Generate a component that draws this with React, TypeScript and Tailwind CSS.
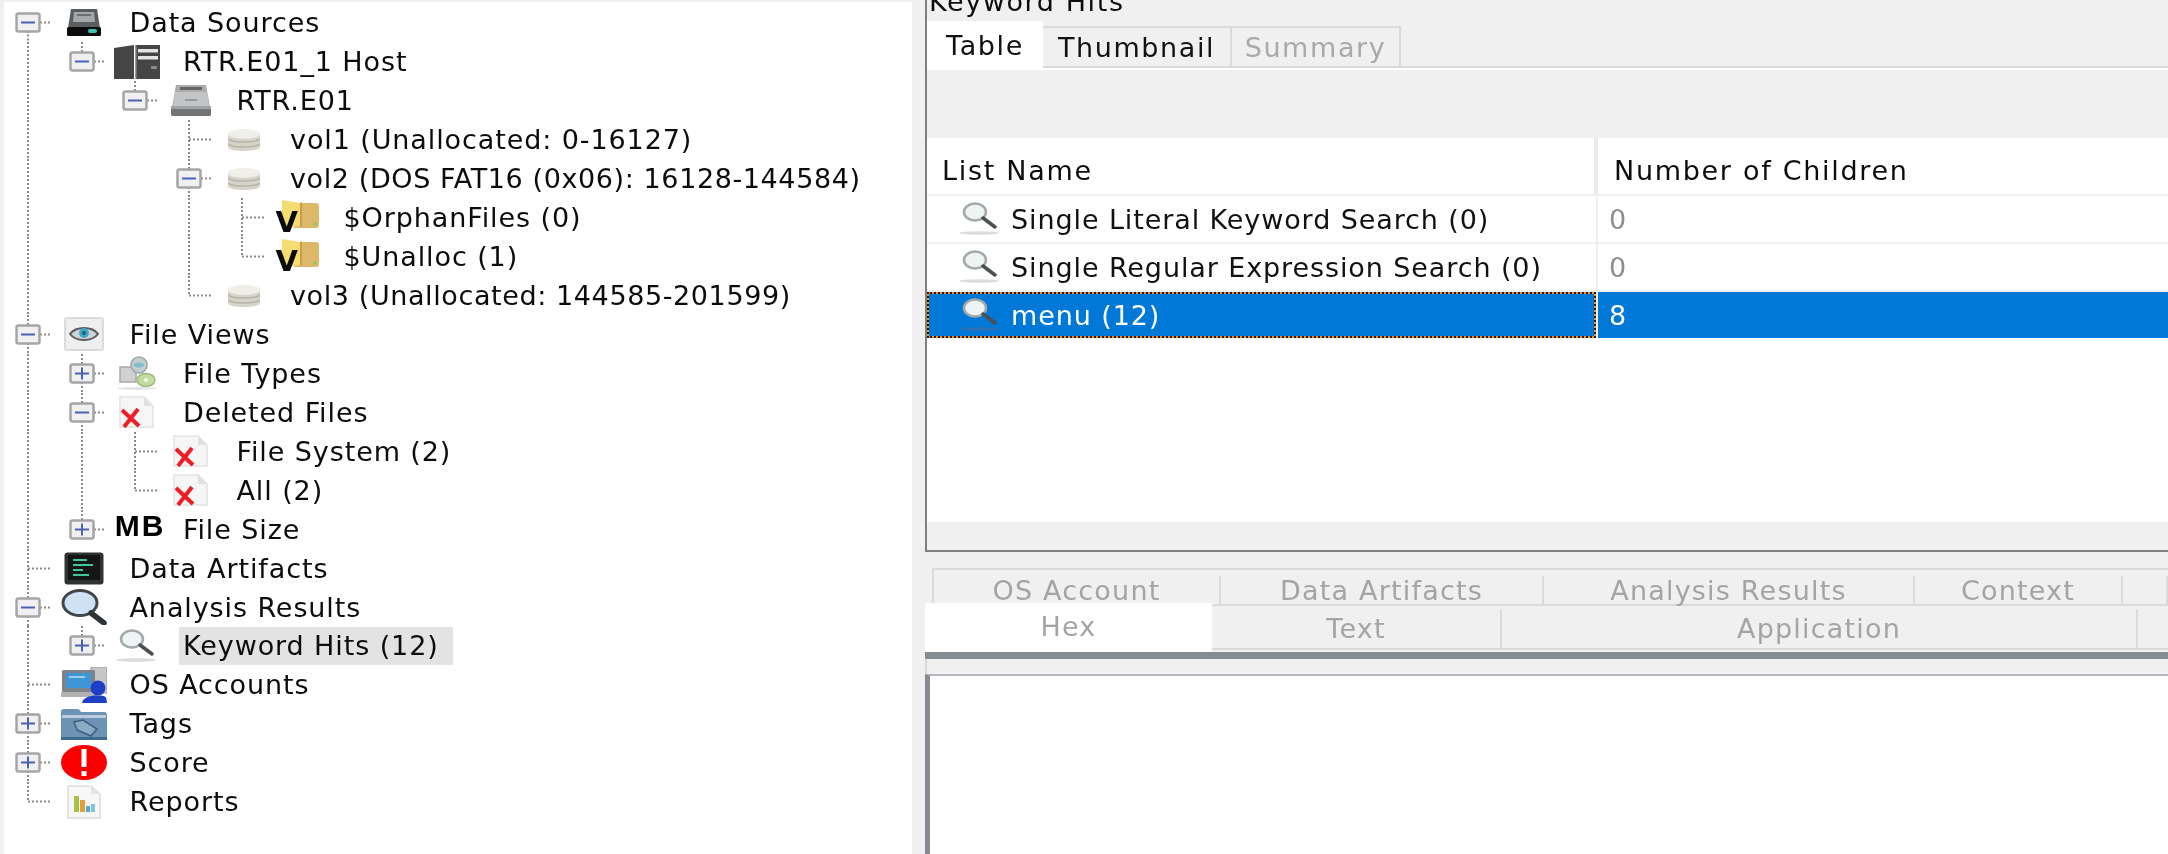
import type { ReactNode } from "react";

const FONT = "font-['DejaVu_Sans','Noto_Sans',sans-serif]";

// Tree icons
function DriveIcon() {
  return (
    <svg width="36" height="30" viewBox="0 0 36 30">
      <path d="M5 1h26l3 19H2z" fill="#5a5d60" />
      <path d="M8 4h20l1 10H7z" fill="#a5a8ab" />
      <path d="M11 6h14v2H11z" fill="#6d7073" />
      <rect x="1" y="19" width="34" height="9" rx="1.5" fill="#0c0c0c" />
      <rect x="22" y="21" width="9" height="4" rx="2" fill="#3fc0b0" />
    </svg>
  );
}

function HostIcon() {
  return (
    <svg width="46" height="35" viewBox="0 0 46 35">
      <path d="M0 4l20-3v34H0z" fill="#454545" />
      <path d="M22 1h24v34H22z" fill="#454545" />
      <path d="M21 1h1.5v34H21z" fill="#9a9a9a" />
      <path d="M24 5h20v3.5H24zM24 12h20v3.5H24z" fill="#e4e4e4" />
      <rect x="37" y="22" width="6" height="3" fill="#8a8a8a" />
    </svg>
  );
}

function DiskIcon() {
  return (
    <svg width="42" height="33" viewBox="0 0 42 33">
      <path d="M6 1h30l4 22H2z" fill="#a9abad" />
      <path d="M10 3h22v3H10z" fill="#666666" />
      <path d="M5 8h32l2 14H3z" fill="#c2c4c6" />
      <path d="M15 15h12v2H15z" fill="#96989a" />
      <rect x="1" y="22" width="40" height="10" rx="1.5" fill="#727476" />
      <rect x="1" y="22" width="40" height="3" fill="#a0a2a4" />
    </svg>
  );
}

function VolumeIcon() {
  return (
    <svg width="32" height="22" viewBox="0 0 32 22">
      <path d="M0 5v13c0 2.500 7 4 16 4s16-1.500 16-4V5z" fill="#d6d4c8" />
      <path d="M0 10c3 2 9 3 16 3s13-1 16-3M0 15c3 2 9 3 16 3s13-1 16-3" stroke="#b4b2a6" strokeWidth="1.500" fill="none" />
      <ellipse cx="16" cy="5" rx="16" ry="5" fill="#efeee9" />
    </svg>
  );
}

function VirtualFolderIcon() {
  return (
    <div className="relative h-[36px] w-[44px]">
      <svg width="44" height="30" viewBox="0 0 44 30">
        <path d="M18 3h22c2 0 3 1 3 3v19c0 2-1 3-3 3H18z" fill="#dcb868" />
        <path d="M6 0l18 3v23L6 29z" fill="#f4dc72" />
        <path d="M24 3l2-1v24l-2 1z" fill="#c99f4c" />
        <circle cx="39" cy="24" r="1.500" fill="#6fcf70" />
      </svg>
      <span className="absolute top-[8px] left-0 text-[29px] leading-none font-bold tracking-normal text-[#0a0a0a]">V</span>
    </div>
  );
}

function EyeIcon() {
  return (
    <svg width="40" height="34" viewBox="0 0 40 34">
      <rect x="1" y="1" width="38" height="32" rx="2" fill="#efefef" stroke="#d2d2d2" strokeWidth="1.500" />
      <path d="M6 17c6-8 22-8 28 0-6 8-22 8-28 0z" fill="#d0d4d4" stroke="#5a5a5a" strokeWidth="2" />
      <circle cx="20" cy="16" r="5" fill="#3fa7c4" />
      <circle cx="20" cy="16" r="2" fill="#1e5f74" />
    </svg>
  );
}

function FileTypesIcon() {
  return (
    <svg width="42" height="34" viewBox="0 0 42 34">
      <rect x="4" y="11" width="16" height="15" fill="#d0d0d0" stroke="#a8a8a8" strokeWidth="1.500" />
      <circle cx="23" cy="9" r="8" fill="#c6cdd0" stroke="#9da4a8" strokeWidth="1.500" />
      <ellipse cx="23" cy="9" rx="5" ry="2.500" fill="#7dbfd0" />
      <ellipse cx="30" cy="24" rx="9" ry="6.500" fill="#bfdc9c" stroke="#9eb883" strokeWidth="1.500" />
      <circle cx="30" cy="24" r="2" fill="#f4f9e8" />
      <ellipse cx="21" cy="32.500" rx="20" ry="1.500" fill="#e4e4e4" />
    </svg>
  );
}

function DeletedIcon() {
  return (
    <svg width="36" height="32" viewBox="0 0 36 32">
      <path d="M1 1h24l9 9v21H1z" fill="#f6f6f6" stroke="#e2e2e2" strokeWidth="1.500" />
      <path d="M25 1v9h9z" fill="#e0e0e0" />
      <path d="M3 14l17 16M19 13L5 31" stroke="#f01d24" strokeWidth="4" />
    </svg>
  );
}

function TerminalIcon() {
  return (
    <svg width="40" height="33" viewBox="0 0 40 33">
      <rect x="0.500" y="0.500" width="39" height="32" rx="3" fill="#2e3231" />
      <rect x="4" y="3" width="32" height="25" fill="#131615" />
      <path d="M9 7h14v2H9zM9 12h20v2H9zM9 17h10v2H9zM9 22h16v2H9z" fill="#3fc99a" />
    </svg>
  );
}

function BigLensIcon() {
  return (
    <svg width="46" height="36" viewBox="0 0 46 36">
      <ellipse cx="19" cy="14" rx="17" ry="12.500" fill="#cfe2f3" stroke="#3f4548" strokeWidth="3" />
      <path d="M30 24l13 10" stroke="#2f3335" strokeWidth="5.500" strokeLinecap="round" />
    </svg>
  );
}

function SmallLensIcon({ shadow = "#dcdcdc" }: { shadow?: string }) {
  return (
    <svg width="42" height="34" viewBox="0 0 42 34" className="shrink-0">
      <ellipse cx="16" cy="10" rx="11" ry="8.500" fill="#eef4f4" stroke="#a4a9a9" strokeWidth="2.500" />
      <path d="M24 16l12 9" stroke="#4b4f50" strokeWidth="3.500" strokeLinecap="round" />
      <ellipse cx="20" cy="31" rx="20" ry="1.800" fill={shadow} />
    </svg>
  );
}

function AccountsIcon() {
  return (
    <svg width="46" height="36" viewBox="0 0 46 36">
      <rect x="30" y="0" width="16" height="26" fill="#c6c6c6" stroke="#9a9a9a" />
      <rect x="1" y="3" width="33" height="22" rx="1.500" fill="#7d8388" />
      <rect x="5" y="6" width="25" height="15" fill="#3d97d6" />
      <path d="M8 9h16v2H8z" fill="#9bcdee" />
      <path d="M0 25h36v5H0z" fill="#b2b2b2" />
      <circle cx="37" cy="21" r="7.500" fill="#1f3fc4" />
      <path d="M21 36c1-5 6-7.500 16-7.500S45 31 46 36z" fill="#1f3fc4" />
    </svg>
  );
}

function TagFolderIcon() {
  return (
    <svg width="46" height="32" viewBox="0 0 46 32">
      <path d="M0 4c0-2 1-3 3-3h13c2 0 3 1 4 3h23c2 0 3 1 3 3v23c0 1-1 2-2 2H2c-1 0-2-1-2-2z" fill="#6c93b3" />
      <path d="M1 7h44v3H1z" fill="#b8cddd" />
      <path d="M13 14l9-2 14 9-6 7-14-6z" fill="#89abc6" stroke="#3e5f7c" strokeWidth="1.500" />
      <path d="M0 29h46v3H0z" fill="#3e6a8d" />
    </svg>
  );
}

function ScoreIcon() {
  return (
    <svg width="46" height="35" viewBox="0 0 46 35">
      <ellipse cx="23" cy="17.500" rx="23" ry="17.500" fill="#fa0000" />
      <path d="M20.500 4h5v18h-5zM20.500 26h5v5h-5z" fill="#ffffff" />
    </svg>
  );
}

function ReportIcon() {
  return (
    <svg width="34" height="34" viewBox="0 0 34 34">
      <path d="M1 1h23l9 8v24H1z" fill="#f7f7f7" stroke="#dcdcdc" strokeWidth="1.500" />
      <path d="M24 1v8h9z" fill="#e3e3e3" />
      <path d="M7 11h5v16H7z" fill="#a6c24a" />
      <path d="M13 15h5v12h-5z" fill="#e2a03c" />
      <path d="M19 21h4v6h-4z" fill="#4fa9d8" />
      <path d="M24 19h4v8h-4z" fill="#7cc7df" />
    </svg>
  );
}

function MbIcon() {
  return <span className="-mt-[6px] ml-[6px] font-['Liberation_Sans',sans-serif] text-[30px] leading-none font-bold tracking-[2px] whitespace-nowrap text-black">MB</span>;
}

// One column of the tree: dotted connector plus the optional expander box
function Connector({ kind, toggle }: { kind: "line" | "none" | "first" | "mid" | "last"; toggle?: "plus" | "minus" }) {
  const dots = { stroke: "#8b8b8b", strokeWidth: 2, strokeDasharray: "2 2" };
  return (
    <svg width="53.500" height="39" viewBox="0 0 53.500 39" className="shrink-0">
      {kind === "line" && <line x1="24" x2="24" y1="0" y2="39" {...dots} />}
      {kind === "mid" && <line x1="24" x2="24" y1="0" y2="39" {...dots} />}
      {kind === "last" && <line x1="24" x2="24" y1="0" y2="19.500" {...dots} />}
      {kind === "first" && <line x1="24" x2="24" y1="19.500" y2="39" {...dots} />}
      {kind !== "line" && kind !== "none" && <line x1="24" x2="48" y1="19.500" y2="19.500" {...dots} />}
      {toggle && (
        <>
          <rect x="12.500" y="10.500" width="23" height="18" rx="2" fill="#f0f0f3" stroke="#a5a5a5" strokeWidth="2.500" />
          <line x1="17" x2="31" y1="19.500" y2="19.500" stroke="#4a62b4" strokeWidth="2" />
          {toggle === "plus" && <line x1="24" x2="24" y1="13.500" y2="25.500" stroke="#4a62b4" strokeWidth="2" />}
        </>
      )}
    </svg>
  );
}

type Row = {
  label: string;
  icon: ReactNode;
  guides: boolean[];
  kind: "first" | "mid" | "last";
  toggle?: "plus" | "minus";
  active?: boolean;
  tight?: boolean;
};

const rows: Row[] = [
  { label: "Data Sources", icon: <DriveIcon />, guides: [], kind: "first", toggle: "minus" },
  { label: "RTR.E01_1 Host", icon: <HostIcon />, guides: [true], kind: "last", toggle: "minus" },
  { label: "RTR.E01", icon: <DiskIcon />, guides: [true, false], kind: "last", toggle: "minus" },
  { label: "vol1 (Unallocated: 0-16127)", icon: <VolumeIcon />, guides: [true, false, false], kind: "mid" },
  { label: "vol2 (DOS FAT16 (0x06): 16128-144584)", icon: <VolumeIcon />, guides: [true, false, false], kind: "mid", toggle: "minus", tight: true },
  { label: "$OrphanFiles (0)", icon: <VirtualFolderIcon />, guides: [true, false, false, true], kind: "mid" },
  { label: "$Unalloc (1)", icon: <VirtualFolderIcon />, guides: [true, false, false, true], kind: "last" },
  { label: "vol3 (Unallocated: 144585-201599)", icon: <VolumeIcon />, guides: [true, false, false], kind: "last", tight: true },
  { label: "File Views", icon: <EyeIcon />, guides: [], kind: "mid", toggle: "minus" },
  { label: "File Types", icon: <FileTypesIcon />, guides: [true], kind: "mid", toggle: "plus" },
  { label: "Deleted Files", icon: <DeletedIcon />, guides: [true], kind: "mid", toggle: "minus" },
  { label: "File System (2)", icon: <DeletedIcon />, guides: [true, true], kind: "mid" },
  { label: "All (2)", icon: <DeletedIcon />, guides: [true, true], kind: "last" },
  { label: "File Size", icon: <MbIcon />, guides: [true], kind: "last", toggle: "plus" },
  { label: "Data Artifacts", icon: <TerminalIcon />, guides: [], kind: "mid" },
  { label: "Analysis Results", icon: <BigLensIcon />, guides: [], kind: "mid", toggle: "minus" },
  { label: "Keyword Hits (12)", icon: <SmallLensIcon />, guides: [true], kind: "last", toggle: "plus", active: true },
  { label: "OS Accounts", icon: <AccountsIcon />, guides: [], kind: "mid" },
  { label: "Tags", icon: <TagFolderIcon />, guides: [], kind: "mid", toggle: "plus" },
  { label: "Score", icon: <ScoreIcon />, guides: [], kind: "mid", toggle: "plus" },
  { label: "Reports", icon: <ReportIcon />, guides: [], kind: "last" },
];

function TreeRow({ row }: { row: Row }) {
  return (
    <div className="flex h-[38.95px] items-center">
      {row.guides.map((on, i) => (
        <Connector key={i} kind={on ? "line" : "none"} />
      ))}
      <Connector kind={row.kind} toggle={row.toggle} />
      <div className="flex w-[68px] shrink-0">
        <div className="flex w-[52px] justify-center">{row.icon}</div>
      </div>
      <span className={`flex h-full items-center pl-[4px] whitespace-nowrap ${row.active ? "bg-[#e3e3e3] pr-[14px]" : ""} ${row.tight ? "tracking-[0.6px]" : ""}`}>{row.label}</span>
    </div>
  );
}

function TopTab({ label, active, disabled, width }: { label: string; active?: boolean; disabled?: boolean; width: string }) {
  if (active) {
    return <div className={`flex h-[49px] items-center justify-center bg-white tracking-[1.6px] text-[#111] ${width}`}>{label}</div>;
  }
  return (
    <div className={`h-[49px] border-b-2 border-white pt-[5px] ${width}`}>
      <div className={`flex h-full items-center justify-center border-t-2 border-r-2 border-b-2 border-[#dadada] tracking-[1.6px] ${disabled ? "text-[#a9a9a9]" : "text-[#111]"}`}>{label}</div>
    </div>
  );
}

function ResultRow({ label, count }: { label: string; count: string }) {
  return (
    <div className="flex h-[48px] border-b-2 border-[#f0f0f0]">
      <div className="flex w-[669px] items-center pl-[32px] text-[#111]">
        <SmallLensIcon />
        <span className="ml-[10px]">{label}</span>
      </div>
      <div className="flex flex-1 items-center border-l-2 border-[#f0f0f0] pl-[11px] text-[#8e8e8e]">{count}</div>
    </div>
  );
}

function LowerTab({ label, width, className = "" }: { label: string; width: string; className?: string }) {
  return <div className={`flex items-center justify-center border-r-2 border-[#dadada] tracking-[1.2px] text-[#a4a4a4] ${width} ${className}`}>{label}</div>;
}

export default function App() {
  return (
    <div className={`flex h-[854px] w-[2168px] overflow-hidden bg-white text-[27px] leading-none tracking-[0.9px] text-[#0c0c0c] blur-[0.5px] ${FONT}`}>
      {/* Tree */}
      <div className="w-[912px] shrink-0 border-t-2 border-l-4 border-[#f0f0f0] pt-[1.5px]">
        {rows.map((row) => (
          <TreeRow key={row.label} row={row} />
        ))}
      </div>

      {/* Right side */}
      <div className="flex min-w-0 flex-1 flex-col bg-[#f0f0f0] pl-[13px]">
        <div className="flex h-[552px] shrink-0 flex-col border-b-2 border-l-2 border-[#7f7f7f]">
          <div className="h-[21px] shrink-0 overflow-hidden pl-[2px]">
            <div className="-mt-[13px] leading-[30px] tracking-[1.6px]">Keyword Hits</div>
          </div>
          <div className="flex shrink-0">
            <TopTab label="Table" active width="w-[116px]" />
            <TopTab label="Thumbnail" width="w-[189px]" />
            <TopTab label="Summary" disabled width="w-[169px]" />
            <div className="h-[49px] flex-1 border-b-2 border-white">
              <div className="h-full border-b-2 border-[#dadada]" />
            </div>
          </div>
          <div className="h-[68px] shrink-0" />
          <div className="flex flex-1 flex-col bg-white">
            <div className="flex h-[58px] shrink-0 border-b-2 border-[#f0f0f0] tracking-[1.7px]">
              <div className="flex w-[671px] items-center border-r-4 border-[#ececec] pt-[8px] pl-[15px]">List Name</div>
              <div className="flex flex-1 items-center pt-[8px] pl-[16px]">Number of Children</div>
            </div>
            <ResultRow label="Single Literal Keyword Search (0)" count="0" />
            <ResultRow label="Single Regular Expression Search (0)" count="0" />
            <div className="flex h-[46px] shrink-0 bg-[#0078d7] text-white">
              <div className="w-[669px] border-2 border-dotted border-[#1c1c1c] bg-[#f0902a]">
                <div className="flex h-full items-center bg-[#0078d7] pl-[30px]">
                  <SmallLensIcon shadow="#2a72b4" />
                  <span className="ml-[10px]">menu (12)</span>
                </div>
              </div>
              <div className="flex flex-1 items-center border-l-2 border-[#f0f0f0] pl-[11px]">8</div>
            </div>
            <div className="flex-1" />
            <div className="h-[28px] shrink-0 bg-[#f0f0f0]" />
          </div>
        </div>

        {/* Content viewer tabs */}
        <div className="mt-[16px] ml-[7px] flex h-[38px] shrink-0 border-t-2 border-b-2 border-l-2 border-[#dadada] pt-[6px]">
          <LowerTab label="OS Account" width="w-[287px]" />
          <LowerTab label="Data Artifacts" width="w-[323px]" />
          <LowerTab label="Analysis Results" width="w-[371px]" />
          <LowerTab label="Context" width="w-[208px]" />
          <LowerTab label="" width="flex-1" className="border-r-0" />
        </div>
        <div className="relative -mt-[3px] flex h-[49px] shrink-0">
          <div className="flex w-[287px] items-center justify-center bg-white pb-[3px] tracking-[1.2px] text-[#a4a4a4]">Hex</div>
          <div className="mt-[3px] mb-[2px] flex flex-1 border-b-2 border-[#dadada] pt-[3px]">
            <LowerTab label="Text" width="w-[290px]" />
            <LowerTab label="Application" width="w-[636px]" />
          </div>
        </div>
        <div className="h-[7px] shrink-0 bg-[#868a92]" />
        <div className="h-[15px] shrink-0 border-l-2 border-[#d8d8d8]" />
        <div className="flex-1 border-t-2 border-l-[5px] border-t-[#b4b7bd] border-l-[#868a92] bg-white" />
      </div>
    </div>
  );
}
